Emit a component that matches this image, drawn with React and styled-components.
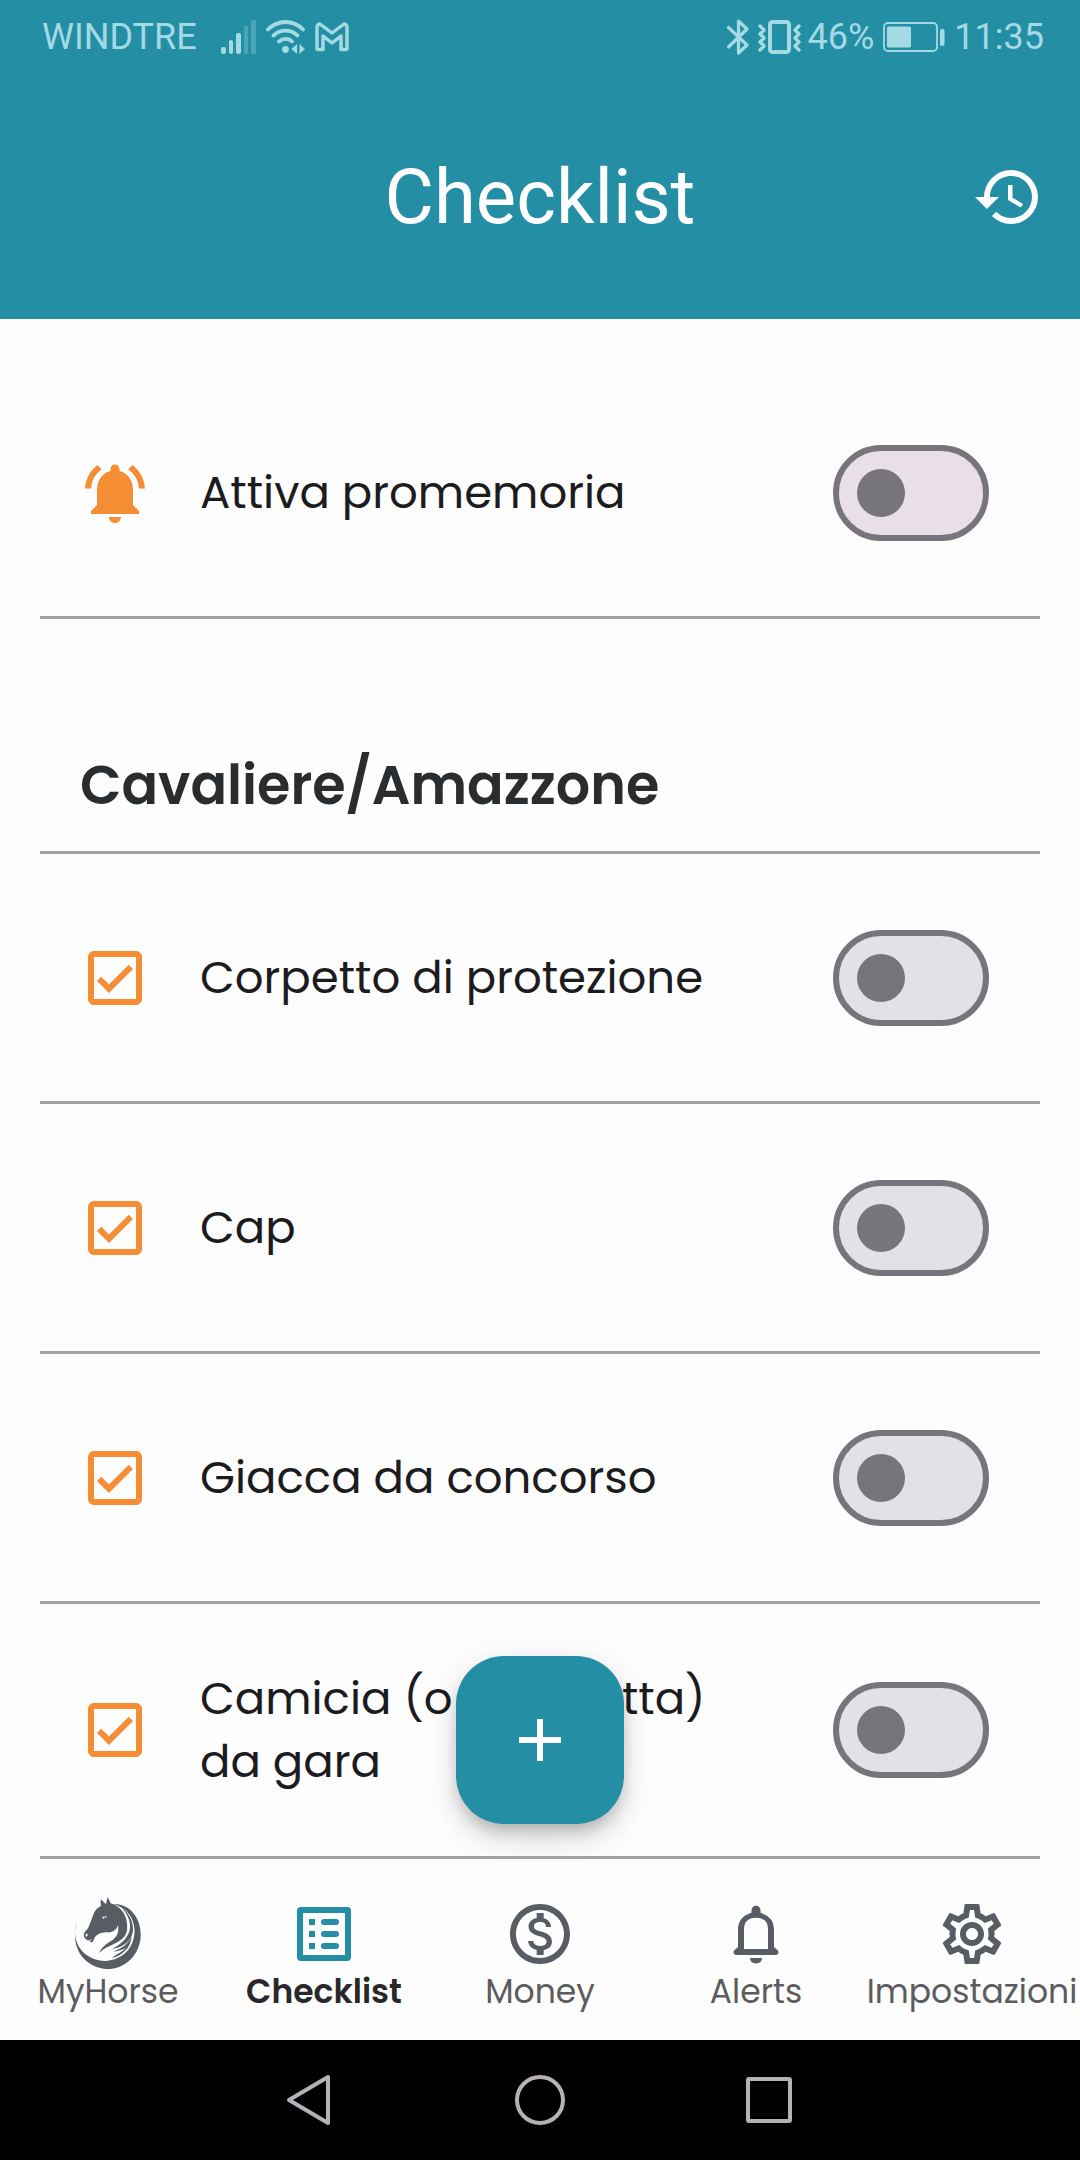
import React from "react";
import styled, { createGlobalStyle } from "styled-components";
import {
  MdAdd,
  MdHistory,
  MdNotificationsActive,
  MdOutlineCheckBox,
  MdOutlineMonetizationOn,
  MdOutlineSettings,
} from "react-icons/md";

const teal = "#238ea4";
const orange = "#f58d35";
const slate = "#585c63";
const statusInk = "#a3dae4";

const GlobalStyle = createGlobalStyle`
  *, *::before, *::after { box-sizing: border-box; }
  body {
    margin: 0;
    background: #fdfdfd;
    font-family: Poppins, Inter, "Liberation Sans", sans-serif;
    color: #1c1b1e;
  }
  button { font: inherit; border: 0; background: none; padding: 0; cursor: pointer; }
`;

const Page = styled.div`
  display: flex;
  flex-direction: column;
  min-height: 100vh;
`;

const Header = styled.header`
  display: flex;
  flex-direction: column;
  background: ${teal};
`;

const StatusBar = styled.div`
  display: flex;
  align-items: center;
  justify-content: space-between;
  height: 74px;
  padding: 0 36px 0 42px;
  color: ${statusInk};
  font-family: Roboto, sans-serif;
  font-size: 36px;
  line-height: 74px;
`;

const StatusGroup = styled.div`
  display: flex;
  align-items: center;
  gap: ${(p) => p.$gap}px;
`;

const StatusIcon = styled.svg`
  display: block;
  height: 36px;
  width: ${(p) => p.$width}px;
`;

const TitleBar = styled.div`
  display: grid;
  grid-template-columns: 1fr auto 1fr;
  align-items: center;
  height: 245px;
  padding: 0 36px;
`;

const Title = styled.h1`
  grid-column: 2;
  margin: 0;
  color: #fff;
  font-family: Roboto, sans-serif;
  font-size: 76px;
  font-weight: 400;
  line-height: 90px;
`;

const HeaderButton = styled.button`
  grid-column: 3;
  justify-self: end;
  display: flex;
  color: #fff;
`;

const Main = styled.main`
  flex: 1;
  padding: 50px 40px 13px;
`;

const List = styled.ul`
  list-style: none;
  margin: 0;
  padding: 0;
`;

const Row = styled.li`
  display: flex;
  align-items: center;
  gap: 49px;
  min-height: 250px;
  padding: 63px 51px 63px 39px;
  border-bottom: 3px solid #a3a3a3;
`;

const RowIcon = styled.span`
  display: flex;
  flex: none;
  color: ${orange};
`;

const RowLabel = styled.label`
  flex: 1;
  padding-right: 24px;
  font-size: 45px;
  line-height: 63px;
`;

const Toggle = styled.input`
  appearance: none;
  flex: none;
  display: flex;
  align-items: center;
  width: 156px;
  height: 96px;
  margin: 0;
  padding: 0 18px;
  border: 6px solid #78747b;
  border-radius: 48px;
  background: ${(p) => (p.$warm ? "#e8dfe7" : "#e4e0e7")};

  &::before {
    content: "";
    width: 48px;
    height: 48px;
    border-radius: 50%;
    background: #78747b;
  }
  &:checked { background: ${teal}; border-color: ${teal}; justify-content: flex-end; }
  &:checked::before { background: #fff; }
`;

const SectionTitle = styled.h2`
  margin: 0;
  padding: 126px 40px 25px;
  border-bottom: 3px solid #a3a3a3;
  color: #2a2d2f;
  font-size: 54px;
  font-weight: 600;
  line-height: 81px;
`;

const BottomNav = styled.nav`
  position: relative;
  display: grid;
  grid-template-columns: repeat(5, 1fr);
  height: 168px;
`;

const Tab = styled.button`
  display: flex;
  flex-direction: column;
  align-items: center;
  min-width: 0;
  padding-top: 26px;
  color: ${(p) => (p.$active ? teal : slate)};
`;

const TabIcon = styled.svg`
  display: block;
  width: 72px;
  height: 72px;
  overflow: visible;
`;

const TabLabel = styled.span`
  color: ${(p) => (p.$active ? "#29272b" : "#5c5c5f")};
  font-size: 33px;
  font-weight: ${(p) => (p.$active ? 600 : 400)};
  line-height: 44px;
  white-space: nowrap;
`;

const AddButton = styled.button`
  position: absolute;
  left: 50%;
  bottom: calc(100% + 48px);
  display: flex;
  align-items: center;
  justify-content: center;
  width: 168px;
  height: 168px;
  margin-left: -84px;
  border-radius: 48px;
  background: ${teal};
  color: #fff;
  box-shadow: 0 9px 15px -3px rgba(0, 0, 0, 0.2), 0 18px 30px rgba(0, 0, 0, 0.1),
    0 3px 36px rgba(0, 0, 0, 0.06);
`;

const SystemBar = styled.footer`
  display: flex;
  align-items: center;
  justify-content: center;
  gap: 158px;
  height: 120px;
  background: #010002;
`;

const SystemButton = styled.button`
  display: flex;
`;

function SignalIcon() {
  return (
    <StatusIcon $width={36} viewBox="0 0 36 36" fill="currentColor">
      <rect x="0" y="28" width="5" height="7" rx="2" />
      <rect x="8" y="21" width="4" height="14" rx="2" />
      <rect x="15" y="14" width="5" height="21" rx="2" />
      <rect x="23" y="7" width="4" height="28" rx="1" opacity=".3" />
      <rect x="30" y="1" width="5" height="34" rx="1" opacity=".3" />
    </StatusIcon>
  );
}

function WifiIcon() {
  return (
    <StatusIcon $width={40} viewBox="0 0 40 36" fill="none" stroke="currentColor" strokeWidth="3.8" strokeLinecap="round">
      <path d="M2 10.500C12 .5 27 .5 37 10.500M7.500 16.500c7-6.500 17-6.500 24 0M13 22.500c4-3.500 9.500-3.500 13 0" />
      <circle cx="19.500" cy="30.500" r="3.400" fill="currentColor" stroke="none" />
      <path d="M31 25v10l-5.500-5zM33.500 35V25l5.500 5z" fill="currentColor" stroke="none" />
    </StatusIcon>
  );
}

function MailIcon() {
  return (
    <StatusIcon $width={34} viewBox="0 0 34 36" fill="none" stroke="currentColor" strokeWidth="3.400" strokeLinejoin="round">
      <path d="M2 29.500V8.500q0-3 3-3.500L17 14 29 5q3 .5 3 3.500v21q0 1-1 1h-5V17l-9 7-9-7v13.500H3q-1 0-1-1z" />
    </StatusIcon>
  );
}

function BluetoothIcon() {
  return (
    <StatusIcon $width={22} viewBox="0 0 22 36" fill="none" stroke="currentColor" strokeWidth="3.200" strokeLinecap="round" strokeLinejoin="round">
      <path d="M1.500 8.500 20 26l-8.500 8V2L20 10 1.500 28" />
    </StatusIcon>
  );
}

function VibrateIcon() {
  return (
    <StatusIcon $width={43} viewBox="0 0 43 36" fill="none" stroke="currentColor" strokeLinecap="round" strokeLinejoin="round">
      <rect x="12" y="3" width="19" height="30" rx="2.500" strokeWidth="4" />
      <path strokeWidth="3.400" d="m2 7 4 4-4 4 4 4-4 4 4 4-4 4M41 7l-4 4 4 4-4 4 4 4-4 4 4 4" />
    </StatusIcon>
  );
}

function BatteryIcon() {
  return (
    <StatusIcon $width={62} viewBox="0 0 62 36" fill="currentColor">
      <rect x="1" y="4" width="53" height="28" rx="4" fill="none" stroke="currentColor" strokeWidth="1.800" />
      <rect x="4" y="7.500" width="24" height="21" rx="1.500" />
      <rect x="57" y="10" width="4.500" height="17" rx="2" />
    </StatusIcon>
  );
}

function HorseIcon() {
  return (
    <TabIcon viewBox="126 54 216 216" fill="currentColor" aria-hidden="true">
      <path d="M140 122C126 166 142 205 171 226 210 254 267 246 296 208 325 169 318 108 276 84 266 78 257 74 246 72 300 68 335 116 332 170 328 226 285 267 232 267 176 266 132 221 135 160 135 146 137 134 140 122Z" />
      <path d="M213 58 223 68 228 72 233 51 242 70C254 75 266 80 276 92 290 110 293 131 291 151 288 172 270 184 250 193 236 200 220 206 208 218 214 202 229 192 243 183 260 172 268 158 264 134 261 149 246 159 230 157 216 157 208 160 200 166 194 171 192 178 190 182 187 188 181 187 178 184 168 180 160 172 162 162 163 156 169 151 174 145 181 131 186 113 192 99 196 89 204 82 213 78 212 71 211 64 213 58Z" />
      <path d="M276 84C296 98 310 124 309 151 306 187 275 203 246 207 270 194 292 178 299 151 304 126 293 103 276 84ZM305 169C302 206 276 227 245 235 264 220 277 215 288 204 279 209 262 214 250 215 276 205 296 191 305 169Z" />
      <path d="M217 112Q225 106 231 109 226 116 219 116Z" fill="#fdfdfd" />
      <circle cx="224" cy="111" r="2.500" />
      <path d="M166 166q2-6 6-5 3 5-2 10ZM174 180q7 1 12-4-5 9-9 7Z" fill="#fdfdfd" />
    </TabIcon>
  );
}

function ListIcon() {
  return (
    <TabIcon viewBox="0 0 24 24" fill="currentColor" aria-hidden="true">
      <rect x="4" y="4" width="16" height="16" rx=".3" fill="none" stroke="currentColor" strokeWidth="2" strokeLinejoin="round" />
      {[7, 11, 15].map((y) => (
        <g key={y}>
          <rect x="7" y={y} width="2" height="2" />
          <rect x="11" y={y} width="6" height="2" rx="1" />
        </g>
      ))}
    </TabIcon>
  );
}

function BellIcon() {
  return (
    <TabIcon viewBox="0 0 24 24" fill="currentColor" aria-hidden="true">
      <path d="M5.500 19q-1 0-1-.9 0-.4.3-.7L6 16.300V10.500Q6 6.300 10.500 4.900V4.100a1.500 1.500 0 0 1 3 0v.8Q18 6.300 18 10.500v5.800l1.200 1.100q.3.300.3.700 0 .9-1 .9zM8 17h8v-6.500q0-3.900-4-3.900t-4 3.900zM10 20h4q0 1.800-2 1.800t-2-1.800z" />
    </TabIcon>
  );
}

const items = [
  "Corpetto di protezione",
  "Cap",
  "Giacca da concorso",
  "Camicia (o maglietta) da gara",
];

const tabs = [
  { label: "MyHorse", icon: <HorseIcon /> },
  { label: "Checklist", icon: <ListIcon />, active: true },
  { label: "Money", icon: <MdOutlineMonetizationOn size={72} /> },
  { label: "Alerts", icon: <BellIcon /> },
  { label: "Impostazioni", icon: <MdOutlineSettings size={72} /> },
];

function ToggleRow({ id, label, icon, warm }) {
  return (
    <Row>
      <RowIcon aria-hidden="true">{icon}</RowIcon>
      <RowLabel htmlFor={id}>{label}</RowLabel>
      <Toggle type="checkbox" role="switch" id={id} $warm={warm} />
    </Row>
  );
}

export default function App() {
  return (
    <Page>
      <GlobalStyle />
      <Header>
        <StatusBar>
          <StatusGroup $gap={9}>
            <StatusGroup $gap={24}>
              <span>WINDTRE</span>
              <SignalIcon />
            </StatusGroup>
            <WifiIcon />
            <MailIcon />
          </StatusGroup>
          <StatusGroup $gap={9}>
            <BluetoothIcon />
            <StatusGroup $gap={7}>
              <VibrateIcon />
              <span>46%</span>
            </StatusGroup>
            <BatteryIcon />
            <span>11:35</span>
          </StatusGroup>
        </StatusBar>
        <TitleBar>
          <Title>Checklist</Title>
          <HeaderButton aria-label="Cronologia">
            <MdHistory size={72} />
          </HeaderButton>
        </TitleBar>
      </Header>
      <Main>
        <List>
          <ToggleRow id="reminder" label="Attiva promemoria" icon={<MdNotificationsActive size={72} />} warm />
        </List>
        <SectionTitle>Cavaliere/Amazzone</SectionTitle>
        <List>
          {items.map((label, i) => (
            <ToggleRow key={label} id={`item-${i}`} label={label} icon={<MdOutlineCheckBox size={72} />} />
          ))}
        </List>
      </Main>
      <BottomNav>
        <AddButton aria-label="Aggiungi">
          <MdAdd size={72} />
        </AddButton>
        {tabs.map((t) => (
          <Tab key={t.label} $active={t.active} aria-current={t.active ? "page" : undefined}>
            {t.icon}
            <TabLabel $active={t.active}>{t.label}</TabLabel>
          </Tab>
        ))}
      </BottomNav>
      <SystemBar>
        <SystemButton aria-label="Indietro">
          <svg width="72" height="72" viewBox="0 0 72 72" fill="none" stroke="#b5b1b6" strokeWidth="4" strokeLinejoin="round">
            <path d="M15 36 54 13v46z" />
          </svg>
        </SystemButton>
        <SystemButton aria-label="Home">
          <svg width="72" height="72" viewBox="0 0 72 72" fill="none" stroke="#b5b1b6" strokeWidth="4">
            <circle cx="36" cy="36" r="23" />
          </svg>
        </SystemButton>
        <SystemButton aria-label="Recenti">
          <svg width="72" height="72" viewBox="0 0 72 72" fill="none" stroke="#b5b1b6" strokeWidth="4">
            <rect x="14" y="15" width="42" height="42" rx="1" />
          </svg>
        </SystemButton>
      </SystemBar>
    </Page>
  );
}
